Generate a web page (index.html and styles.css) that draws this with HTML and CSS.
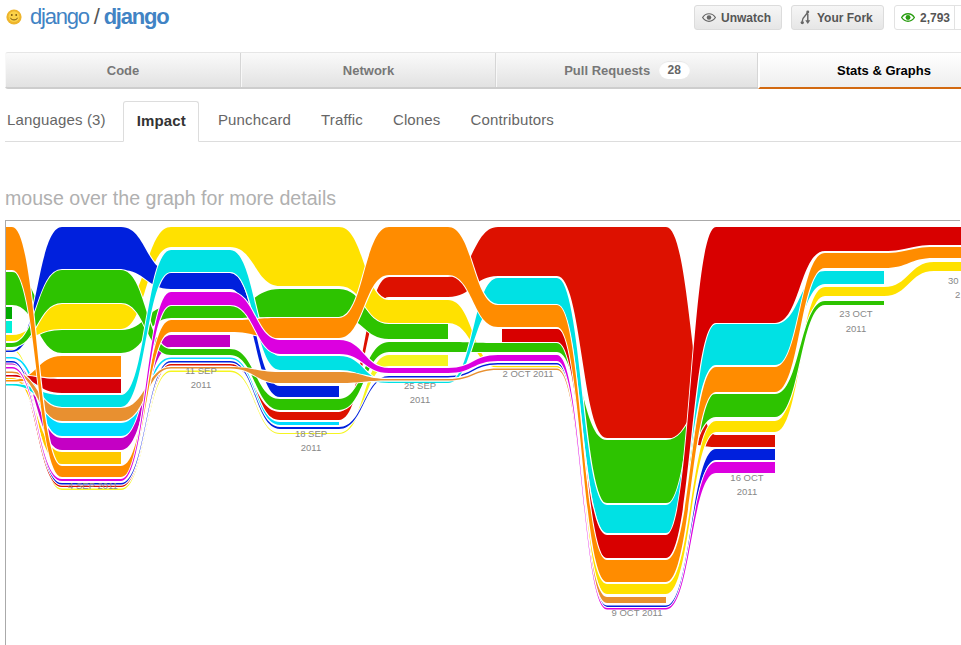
FILE: index.html
```html
<!DOCTYPE html>
<html lang="en">
<head>
<meta charset="utf-8">
<title>django / django - Impact</title>
<link rel="stylesheet" href="styles.css">
</head>
<body>
<header class="top">
  <h1 class="title">
    <svg class="avatar" viewBox="0 0 16 16" aria-hidden="true"><circle cx="8" cy="8" r="7.6" fill="#eeb52c"/><circle cx="8" cy="7.6" r="5.4" fill="#fbd249"/><circle cx="5.8" cy="6" r=".9" fill="#7a5510"/><circle cx="10.2" cy="6" r=".9" fill="#7a5510"/><path d="M4.4 8.8C5.4 11.6 10.6 11.6 11.6 8.8" fill="none" stroke="#7a5510" stroke-width="1"/></svg>
    <a class="owner">django</a><span class="slash"> / </span><a class="repo">django</a>
  </h1>
  <div class="actions">
    <a class="btn btn-watch"><svg class="ico" viewBox="0 0 16 10" aria-hidden="true"><path d="M.7 5C2.6 2 5 .7 8 .7S13.4 2 15.3 5C13.4 8 11 9.3 8 9.3S2.6 8 .7 5Z" fill="none" stroke="#666" stroke-width="1.4"/><circle cx="8" cy="5" r="2.6" fill="#666"/></svg>Unwatch</a>
    <a class="btn btn-fork"><svg class="ico-fork" viewBox="0 0 12 16" aria-hidden="true"><path d="M8.5 1.5C8.5 5 2.5 6.5 2.5 12M8.5 4V12" fill="none" stroke="#666" stroke-width="1.6"/><circle cx="8.5" cy="2" r="1.6" fill="#666"/><circle cx="2.5" cy="13.5" r="1.8" fill="#666"/><path d="M5.8 11H11.2L8.5 15Z" fill="#666"/></svg>Your Fork</a>
    <div class="counts">
      <a class="count"><svg class="ico" viewBox="0 0 16 10" aria-hidden="true"><path d="M.7 5C2.6 2 5 .7 8 .7S13.4 2 15.3 5C13.4 8 11 9.3 8 9.3S2.6 8 .7 5Z" fill="none" stroke="#2a9d12" stroke-width="1.6"/><circle cx="8" cy="5" r="2.8" fill="#2a9d12"/></svg>2,793</a>
      <a class="count count-next"></a>
    </div>
  </div>
</header>

<nav class="tabs">
  <a class="tab">Code</a>
  <a class="tab">Network</a>
  <a class="tab">Pull Requests <span class="pill">28</span></a>
  <a class="tab tab-on">Stats &amp; Graphs</a>
</nav>

<nav class="subnav">
  <a class="sub sub-first">Languages (3)</a>
  <a class="sub sub-on">Impact</a>
  <a class="sub">Punchcard</a>
  <a class="sub">Traffic</a>
  <a class="sub">Clones</a>
  <a class="sub">Contributors</a>
</nav>

<p class="hint">mouse over the graph for more details</p>

<div class="chart">
  <svg class="graph" width="956" height="424" viewBox="6 221 956 424" role="img" aria-label="Impact graph">
    <g class="ribbons">
      <path fill="#f5f520" d="M5 349H12C37 349 37 488.5 62 488.5H121C146 488.5 146 370.5 171 370.5H230C255 370.5 255 433 280 433H339C364 433 364 355 389 355H448V366H389C364 366 364 434 339 434H280C255 434 255 372 230 372H171C146 372 146 490 121 490H62C37 490 37 350.5 12 350.5H5Z"/>
      <path fill="#dd1100" d="M5 373H12C37 373 37 485.5 62 485.5H121C146 485.5 146 364 171 364H230C255 364 255 412 280 412H339C364 412 364 277 389 277H448C473 277 473 227 498 227H557C582 227 582 227 607 227H666C691 227 691 435 716 435H775V447H716C691 447 691 438 666 438H607C582 438 582 276 557 276H498C473 276 473 297 448 297H389C364 297 364 420 339 420H280C255 420 255 365.5 230 365.5H171C146 365.5 146 487 121 487H62C37 487 37 374.5 12 374.5H5Z"/>
      <path fill="#2dc300" d="M5 272H12C37 272 37 330 62 330H121C146 330 146 306 171 306H230C255 306 255 289 280 289H339C364 289 364 323 389 323H448V339H389C364 339 364 317 339 317H280C255 317 255 318 230 318H171C146 318 146 353 121 353H62C37 353 37 305 12 305H5Z"/>
      <path fill="#ffe100" d="M5 335H12C37 335 37 304 62 304H121C146 304 146 227 171 227H230C255 227 255 227 280 227H339C364 227 364 300 389 300H448C473 300 473 366 498 366H557C582 366 582 584 607 584H666C691 584 691 421 716 421H775C800 421 800 287 825 287H884C909 287 909 262 934 262H962V271H934C909 271 909 296 884 296H825C800 296 800 432 775 432H716C691 432 691 594 666 594H607C582 594 582 367.5 557 367.5H498C473 367.5 473 323 448 323H389C364 323 364 286 339 286H280C255 286 255 247 230 247H171C146 247 146 329 121 329H62C37 329 37 341 12 341H5Z"/>
      <path fill="#0020dd" d="M5 350.5H12C37 350.5 37 227 62 227H121C146 227 146 272 171 272H230C255 272 255 386 280 386H339V397H280C255 397 255 289 230 289H171C146 289 146 270 121 270H62C37 270 37 352 12 352H5Z"/>
      <path fill="#00aa00" d="M5 307H12V319H5Z"/>
      <path fill="#00f0d8" d="M5 321H12V333H5Z"/>
      <path fill="#00dcff" d="M5 357H12C37 357 37 423 62 423H121C146 423 146 357.5 171 357.5H230C255 357.5 255 422 280 422H339V425H280C255 425 255 359 230 359H171C146 359 146 436 121 436H62C37 436 37 358.5 12 358.5H5Z"/>
      <path fill="#c400c4" d="M5 363H12C37 363 37 438 62 438H121C146 438 146 335 171 335H230V347H171C146 347 146 450 121 450H62C37 450 37 364.5 12 364.5H5Z"/>
      <path fill="#ffc800" d="M5 378H12C37 378 37 452 62 452H121V464H62C37 464 37 379.5 12 379.5H5Z"/>
      <path fill="#ff8c00" d="M5 380H12C37 380 37 356 62 356H121V377H62C37 377 37 381.5 12 381.5H5Z"/>
      <path fill="#d40008" d="M5 375H12C37 375 37 379 62 379H121V393H62C37 393 37 376.5 12 376.5H5Z"/>
      <path fill="#0020dd" d="M5 361H12C37 361 37 483 62 483H121C146 483 146 361 171 361H230C255 361 255 427 280 427H339C364 427 364 376 389 376H448C473 376 473 363 498 363H557C582 363 582 605.5 607 605.5H666C691 605.5 691 449 716 449H775V460H716C691 460 691 607 666 607H607C582 607 582 364.5 557 364.5H498C473 364.5 473 377.5 448 377.5H389C364 377.5 364 429 339 429H280C255 429 255 362.5 230 362.5H171C146 362.5 146 484.5 121 484.5H62C37 484.5 37 362.5 12 362.5H5Z"/>
      <path fill="#2dc300" d="M5 343H12C37 343 37 270 62 270H121C146 270 146 349 171 349H230C255 349 255 399 280 399H339C364 399 364 342 389 342H448C473 342 473 343 498 343H557C582 343 582 440 607 440H666C691 440 691 394 716 394H775C800 394 800 301 825 301H884V305H825C800 305 800 417 775 417H716C691 417 691 503 666 503H607C582 503 582 352 557 352H498C473 352 473 352 448 352H389C364 352 364 410 339 410H280C255 410 255 355 230 355H171C146 355 146 303 121 303H62C37 303 37 347 12 347H5Z"/>
      <path fill="#00e1e4" d="M5 384H12C37 384 37 395 62 395H121C146 395 146 250 171 250H230C255 250 255 356 280 356H339C364 356 364 381.5 389 381.5H448C473 381.5 473 278 498 278H557C582 278 582 505 607 505H666C691 505 691 324 716 324H775C800 324 800 271 825 271H884V284H825C800 284 800 365 775 365H716C691 365 691 533 666 533H607C582 533 582 305 557 305H498C473 305 473 383 448 383H389C364 383 364 370 339 370H280C255 370 255 272 230 272H171C146 272 146 407 121 407H62C37 407 37 385.5 12 385.5H5Z"/>
      <path fill="#d80000" d="M502 329H557C582 329 582 535 607 535H666C691 535 691 227 716 227H775C800 227 800 227 825 227H884C909 227 909 227 934 227H962V245H934C909 245 909 251 884 251H825C800 251 800 323 775 323H716C691 323 691 558 666 558H607C582 558 582 342 557 342H502Z"/>
      <path fill="#e89030" d="M5 371.5H12C37 371.5 37 408 62 408H121C146 408 146 367 171 367H230C255 367 255 372 280 372H339C364 372 364 379 389 379H448C473 379 473 368.5 498 368.5H557C582 368.5 582 597 607 597H666V603H607C582 603 582 370 557 370H498C473 370 473 380.5 448 380.5H389C364 380.5 364 383 339 383H280C255 383 255 368.5 230 368.5H171C146 368.5 146 421 121 421H62C37 421 37 373 12 373H5Z"/>
      <path fill="#ff8c00" d="M5 227H12C37 227 37 466 62 466H121C146 466 146 320 171 320H230C255 320 255 318 280 318H339C364 318 364 227 389 227H448C473 227 473 305 498 305H557C582 305 582 560 607 560H666C691 560 691 367 716 367H775C800 367 800 253 825 253H884C909 253 909 247 934 247H962V258H934C909 258 909 268 884 268H825C800 268 800 392 775 392H716C691 392 691 582 666 582H607C582 582 582 327 557 327H498C473 327 473 275 448 275H389C364 275 364 338 339 338H280C255 338 255 332 230 332H171C146 332 146 477 121 477H62C37 477 37 270 12 270H5Z"/>
      <path fill="#dc00e0" d="M5 367H12C37 367 37 479 62 479H121C146 479 146 292 171 292H230C255 292 255 340 280 340H339C364 340 364 368 389 368H448C473 368 473 355 498 355H557C582 355 582 608 607 608H666C691 608 691 462 716 462H775V473H716C691 473 691 609.5 666 609.5H607C582 609.5 582 361 557 361H498C473 361 473 373 448 373H389C364 373 364 354 339 354H280C255 354 255 305 230 305H171C146 305 146 481 121 481H62C37 481 37 368.5 12 368.5H5Z"/>
    </g>
    <g class="labels">
      <text x="93" y="489">4 SEP 2011</text>
      <text x="201" y="374">11 SEP</text><text x="201" y="388">2011</text>
      <text x="311" y="437">18 SEP</text><text x="311" y="451">2011</text>
      <text x="420" y="389">25 SEP</text><text x="420" y="403">2011</text>
      <text x="528" y="377">2 OCT 2011</text>
      <text x="637" y="616">9 OCT 2011</text>
      <text x="747" y="481">16 OCT</text><text x="747" y="495">2011</text>
      <text x="856" y="317">23 OCT</text><text x="856" y="332">2011</text>
      <text class="edge" x="948" y="284">30</text><text class="edge" x="955" y="298">2</text>
    </g>
  </svg>
</div>
</body>
</html>
```
FILE: styles.css
```css
html, body {
  margin: 0;
  padding: 0;
  width: 961px;
  height: 645px;
  overflow: hidden;
  background: #fff;
  font-family: "Liberation Sans", Arial, sans-serif;
}

.top {
  display: flex;
  height: 52px;
  box-sizing: border-box;
  padding-left: 6px;
}

.title {
  flex: 0 0 688px;
  display: flex;
  align-items: center;
  height: 34px;
  margin: 0;
  font-size: 22px;
  font-weight: normal;
  letter-spacing: -1.2px;
  color: #4183c4;
  white-space: pre;
}

.avatar {
  width: 16px;
  height: 16px;
  margin-right: 8px;
  flex: none;
}

.slash { color: #555; }
.repo { font-weight: bold; }

.actions {
  display: flex;
  flex: none;
  align-items: flex-start;
  padding-top: 5px;
  gap: 9px;
}

.btn {
  box-sizing: border-box;
  display: flex;
  align-items: center;
  height: 25px;
  border: 1px solid #dcdcdc;
  border-radius: 3px;
  background: linear-gradient(#f6f6f6, #e6e6e6);
  font-size: 12px;
  font-weight: bold;
  color: #555;
  letter-spacing: 0;
  white-space: nowrap;
}

.btn-watch { width: 88px; padding-left: 7px; }
.btn-fork { width: 93px; padding-left: 8px; }

.ico {
  width: 14px;
  height: 9px;
  margin-right: 5px;
  flex: none;
}

.ico-fork {
  width: 11px;
  height: 15px;
  margin-right: 6px;
  flex: none;
}

.counts {
  display: flex;
  height: 25px;
  box-sizing: border-box;
  margin-left: 1px;
  border: 1px solid #e2e2e2;
  border-radius: 3px;
  background: #fff;
}

.count {
  display: flex;
  align-items: center;
  box-sizing: border-box;
  width: 60px;
  padding-left: 6px;
  font-size: 12px;
  font-weight: bold;
  color: #555;
  border-right: 1px solid #e2e2e2;
}

.count-next {
  width: 20px;
  padding: 0;
  border-right: 0;
}

.tabs {
  display: grid;
  grid-template-columns: 236px 255px 262px 250px;
  box-sizing: border-box;
  height: 37px;
  margin-left: 5px;
  width: 1003px;
  border-top: 1px solid #e6e6e6;
  border-bottom: 2px solid #cdcdcd;
  border-radius: 3px 0 0 3px;
  background: linear-gradient(#fafafa, #e2e2e2);
}

.tab {
  display: flex;
  align-items: center;
  justify-content: center;
  border-left: 1px solid #f8f8f8;
  border-right: 1px solid #d6d6d6;
  font-size: 13px;
  font-weight: bold;
  color: #777;
  white-space: pre;
}

.tab-on {
  color: #000;
  background: linear-gradient(#fff, #eee);
  border-left: 2px solid #fff;
  border-right: 0;
  border-bottom: 2px solid #d26911;
  margin-bottom: -2px;
}

.pill {
  display: inline-block;
  box-sizing: border-box;
  width: 31px;
  height: 18px;
  margin-left: 5px;
  border-radius: 9px;
  background: #fff;
  box-shadow: inset 0 1px 1px #e6e6e6;
  font-size: 12px;
  line-height: 18px;
  text-align: center;
  color: #666;
}

.subnav {
  display: flex;
  box-sizing: border-box;
  height: 41px;
  margin-top: 12px;
  margin-left: 5px;
  border-bottom: 1px solid #ddd;
}

.sub {
  display: flex;
  align-items: center;
  padding: 0 15px 3px;
  font-size: 15px;
  letter-spacing: .15px;
  color: #666;
}

.sub-first { padding-left: 2px; }

.sub-on {
  height: 41px;
  box-sizing: border-box;
  margin: 0 4px 0 2px;
  padding: 0 12px 3px 13px;
  border: 1px solid #ddd;
  border-bottom: 1px solid #fff;
  border-radius: 3px 3px 0 0;
  background: #fff;
  font-weight: bold;
  color: #333;
}

.hint {
  margin: 0;
  padding: 44px 0 10px 5px;
  font-size: 19.6px;
  line-height: 24px;
  color: #b0b0b0;
}

.chart {
  box-sizing: border-box;
  width: 955px;
  height: 425px;
  margin-left: 5px;
  border-top: 1px solid #aaa;
  border-left: 1px solid #aaa;
}

.graph {
  display: block;
}

.ribbons path {
  stroke: #fff;
  stroke-width: 2;
  paint-order: stroke;
}

.labels text {
  font-size: 9.5px;
  fill: #888;
  text-anchor: middle;
}

.labels .edge {
  text-anchor: start;
}
```
